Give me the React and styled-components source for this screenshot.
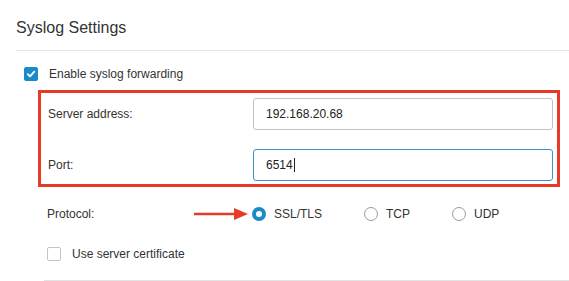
import React from 'react'
import styled, { createGlobalStyle } from 'styled-components'

const GlobalStyle = createGlobalStyle`
  html, body {
    margin: 0;
    padding: 0;
    background: #fff;
  }
  body {
    font-family: "Liberation Sans", Arial, Helvetica, sans-serif;
    color: #333;
    overflow: hidden;
  }
`

const Page = styled.div`
  width: 569px;
  height: 281px;
  padding: 18px 0 0 16px;
  box-sizing: border-box;
`

const Title = styled.h2`
  margin: 0;
  font-size: 16px;
  line-height: 20px;
  font-weight: normal;
  color: #333;
`

const Divider = styled.div`
  height: 1px;
  background: #e3e3e3;
  margin: ${props => props.$top}px 0 0 ${props => props.$left}px;
`

const CheckRow = styled.label`
  display: flex;
  align-items: center;
  height: 14px;
  gap: ${props => props.$gap}px;
  margin: ${props => props.$top}px 0 0 ${props => props.$left}px;
  font-size: 12px;
`

const Box = styled.span`
  width: 14px;
  height: 14px;
  box-sizing: border-box;
  border-radius: 2px;
  display: inline-flex;
  align-items: center;
  justify-content: center;
  background: ${props => (props.$checked ? '#1b8ac9' : '#fff')};
  border: 1px solid ${props => (props.$checked ? '#1b8ac9' : '#c4c4c4')};
  flex: none;
`

const Highlight = styled.div`
  margin: 9px 0 0 22px;
  width: 522px;
  box-sizing: border-box;
  border: 3px solid #e63a2b;
  padding: 5px 4px 3px 7px;
  display: flex;
  flex-direction: column;
  gap: 19px;
`

const FieldRow = styled.div`
  display: flex;
  align-items: center;
  font-size: 12px;
`

const Label = styled.div`
  width: ${props => props.$width}px;
  flex: none;
  font-size: 12px;
`

const Field = styled.div`
  width: 300px;
  height: 32px;
  box-sizing: border-box;
  border: 1px solid ${props => (props.$focused ? '#3b92cf' : '#c2c2c2')};
  border-radius: 3px;
  padding: 0 12px;
  display: flex;
  align-items: center;
  font-size: 12px;
  color: #222;
`

const Caret = styled.span`
  display: inline-block;
  width: 1px;
  height: 14px;
  background: #222;
  margin-left: 1px;
`

const ProtocolRow = styled.div`
  display: flex;
  align-items: center;
  height: 14px;
  margin: 20px 0 0 31px;
  font-size: 12px;
`

const Options = styled.div`
  display: flex;
  align-items: center;
  gap: 42px;
`

const Option = styled.label`
  position: relative;
  display: flex;
  align-items: center;
  gap: 8px;
`

const Radio = styled.span`
  width: 14px;
  height: 14px;
  box-sizing: border-box;
  border-radius: 50%;
  flex: none;
  border: ${props => (props.$checked ? '4px solid #1b8ac9' : '1px solid #9a9a9a')};
  background: #fff;
`

const Arrow = styled.svg`
  position: absolute;
  right: calc(100% + 4px);
  top: 50%;
  transform: translateY(-50%);
`

const Check = () => (
  <svg width="10" height="10" viewBox="0 0 10 10">
    <path d="M1.8 5.2 L4 7.4 L8.3 2.6" fill="none" stroke="#fff" strokeWidth="1.8" strokeLinecap="round" strokeLinejoin="round" />
  </svg>
)

export default function App() {
  return (
    <>
      <GlobalStyle />
      <Page>
        <Title>Syslog Settings</Title>
        <Divider $top={12} $left={0} />
        <CheckRow $top={16} $left={8} $gap={11}>
          <Box $checked><Check /></Box>
          Enable syslog forwarding
        </CheckRow>
        <Highlight>
          <FieldRow>
            <Label $width={205}>Server address:</Label>
            <Field>192.168.20.68</Field>
          </FieldRow>
          <FieldRow>
            <Label $width={205}>Port:</Label>
            <Field $focused>6514<Caret /></Field>
          </FieldRow>
        </Highlight>
        <ProtocolRow>
          <Label $width={205}>Protocol:</Label>
          <Options>
            <Option>
              <Arrow width="54" height="14" viewBox="0 0 54 14">
                <line x1="0" y1="7" x2="42" y2="7" stroke="#e63a2b" strokeWidth="2.6" />
                <polygon points="40,1 54,7 40,13" fill="#e63a2b" />
              </Arrow>
              <Radio $checked />
              SSL/TLS
            </Option>
            <Option>
              <Radio />
              TCP
            </Option>
            <Option>
              <Radio />
              UDP
            </Option>
          </Options>
        </ProtocolRow>
        <CheckRow $top={26} $left={31} $gap={11}>
          <Box />
          Use server certificate
        </CheckRow>
        <Divider $top={19} $left={28} />
      </Page>
    </>
  )
}
